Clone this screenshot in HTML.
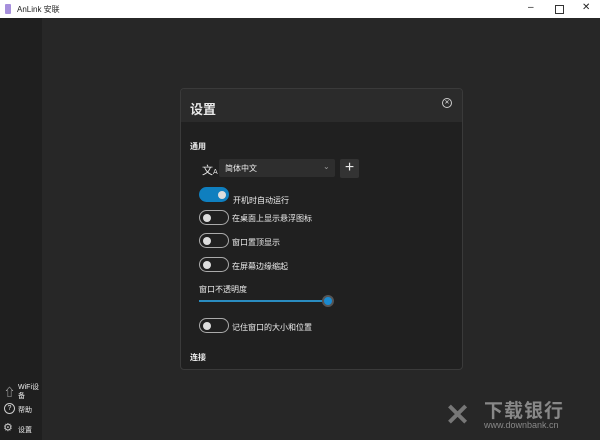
<html><head><style>
body{margin:0;width:600px;height:440px;overflow:hidden;background:#272727;font-family:"Liberation Sans","Noto Sans CJK SC",sans-serif;position:relative;color:#e8e8e8}
.a{position:absolute}
.tb{left:0;top:0;width:600px;height:18px;background:#fff;color:#222;font-size:8px}
.sb{left:0;top:18px;width:42px;height:422px;background:#1f1f1f}
.dlg{left:180px;top:88px;width:281px;height:280px;background:#202020;border:1px solid #3a3a3a;border-radius:4px;overflow:hidden}
.hd{left:0;top:0;width:281px;height:33px;background:#2b2b2b}
.tg{width:30px;height:15px;border:1px solid #aaa;border-radius:8px;box-sizing:border-box}
.tg:after{content:"";position:absolute;left:3px;top:2.5px;width:8px;height:8px;border-radius:50%;background:#ddd}
.on{background:#0f7fbf;border-color:#0f7fbf}
.on:after{left:18px}
.lb{font-size:8px;color:#eee}
</style></head><body>
<div class="a tb"><div class="a" style="left:5px;top:4px;width:6px;height:10px;background:#a68fdc;border-radius:1px"></div><span class="a" style="left:17px;top:4px">AnLink 安联</span>
<span class="a" style="left:528px;top:2px;font-size:10px">–</span>
<div class="a" style="left:555px;top:5px;width:7px;height:7px;border:1px solid #333"></div>
<span class="a" style="left:582px;top:2px;font-size:10px">✕</span></div>
<div class="a sb"></div>
<div class="a" style="left:4px;top:384px;font-size:11px;color:#ccc">⇧</div>
<div class="a lb" style="left:18px;top:383px;font-size:7px;line-height:9px">WiFi设<br>备</div>
<div class="a" style="left:4px;top:403px;width:9px;height:9px;border:1px solid #ccc;border-radius:50%;font-size:7px;text-align:center;line-height:9px">?</div>
<div class="a lb" style="left:18px;top:405px;font-size:7px">帮助</div>
<div class="a" style="left:3px;top:421px;font-size:11px;color:#ccc">⚙</div>
<div class="a lb" style="left:18px;top:425px;font-size:7px">设置</div>
<div class="a dlg">
<div class="a hd"></div>
<div class="a" style="left:9px;top:10px;font-size:13px;font-weight:bold">设置</div>
<div class="a" style="left:261px;top:9px;width:8px;height:8px;border:1px solid #ccc;border-radius:50%;font-size:6px;text-align:center;line-height:8px">✕</div>
<div class="a lb" style="left:9px;top:52px;font-weight:bold">通用</div>
<div class="a" style="left:21px;top:73px;font-size:11px">文<span style="font-size:7px">A</span></div>
<div class="a" style="left:38px;top:70px;width:116px;height:18px;background:#2e2e2e;border-radius:2px"><span class="a lb" style="left:6px;top:4px">简体中文</span><span class="a" style="left:104px;top:3px;font-size:8px;color:#999">⌄</span></div>
<div class="a" style="left:159px;top:70px;width:19px;height:19px;background:#333;border-radius:2px;font-size:16px;text-align:center;line-height:18px">+</div>
<div class="a tg on" style="left:18px;top:98px"></div><div class="a lb" style="left:52px;top:106px">开机时自动运行</div>
<div class="a tg" style="left:18px;top:121px"></div><div class="a lb" style="left:51px;top:124px">在桌面上显示悬浮图标</div>
<div class="a tg" style="left:18px;top:144px"></div><div class="a lb" style="left:51px;top:148px">窗口置顶显示</div>
<div class="a tg" style="left:18px;top:168px"></div><div class="a lb" style="left:51px;top:172px">在屏幕边缘缩起</div>
<div class="a lb" style="left:18px;top:195px">窗口不透明度</div>
<div class="a" style="left:18px;top:211px;width:134px;height:2px;background:#2a8cc0"></div>
<div class="a" style="left:141px;top:206px;width:8px;height:8px;border-radius:50%;background:#1a8ad0;border:2px solid #555"></div>
<div class="a tg" style="left:18px;top:229px"></div><div class="a lb" style="left:51px;top:233px">记住窗口的大小和位置</div>
<div class="a lb" style="left:9px;top:263px;font-weight:bold">连接</div>
</div>
<div class="a" style="left:445px;top:398px;font-size:30px;color:#777;font-weight:bold">✕</div>
<div class="a" style="left:484px;top:396px;font-size:19px;color:#888;font-weight:bold;letter-spacing:1px">下载银行</div>
<div class="a" style="left:484px;top:420px;font-size:9px;color:#888">www.downbank.cn</div>
</body></html>
